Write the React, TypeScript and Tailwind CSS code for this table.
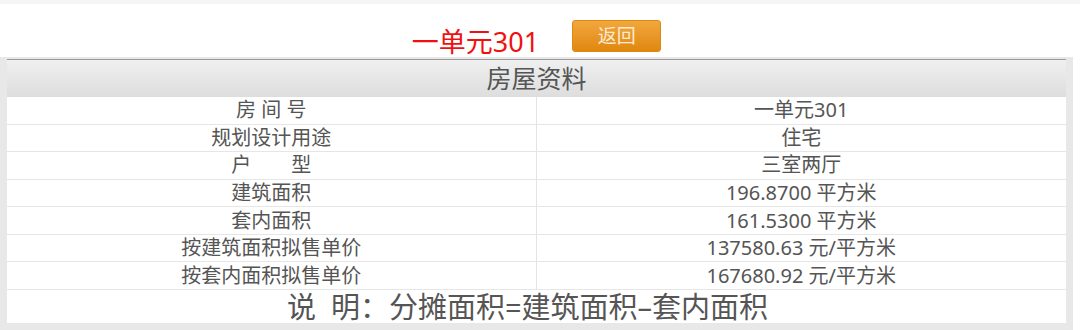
import React from "react";

const rows: [string, string][] = [
  ["房 间 号", "一单元301"],
  ["规划设计用途", "住宅"],
  ["户\u3000\u3000型", "三室两厅"],
  ["建筑面积", "196.8700 平方米"],
  ["套内面积", "161.5300 平方米"],
  ["按建筑面积拟售单价", "137580.63 元/平方米"],
  ["按套内面积拟售单价", "167680.92 元/平方米"],
];

const font = { fontFamily: '"Noto Sans", "Noto Sans CJK SC", sans-serif' };

export default function App() {
  return (
    <div className="w-[1080px] h-[330px] bg-white overflow-hidden" style={font}>
      <div className="h-[4px] bg-[#f5f5f5]" />
      <div className="h-[53px] flex justify-center items-start gap-[33px] pr-[7px]">
        <span className="mt-[24px] text-[27px] leading-[28px] text-[#f01010] whitespace-nowrap">一单元301</span>
        <button className="mt-[16px] w-[89px] h-[32px] rounded-[3px] border border-[#dd8a12] bg-gradient-to-b from-[#f2a73c] to-[#e0870a] text-[19px] leading-none text-[#fdebd0]">
          返回
        </button>
      </div>
      <div className="w-[1073px] bg-[#e8e8e8] pt-[2px] pl-[7px] pr-[7px] pb-[7px]">
        <div className="bg-white text-[#555]">
          <div className="h-[38px] border-t border-[#9a9a9a] bg-gradient-to-b from-[#f0f0f0] to-[#dddddd] flex items-center justify-center text-[25px] leading-none">
            房屋资料
          </div>
          {rows.map(([k, v]) => (
            <div key={k} className="h-[27.57px] grid grid-cols-2 border-b border-[#e6e6e6] text-[20px] leading-none">
              <div className="flex items-center justify-center border-r border-[#e4e4e4] whitespace-pre">{k}</div>
              <div className="flex items-center justify-center whitespace-pre">{v}</div>
            </div>
          ))}
          <div className="h-[33px] flex items-center justify-center pr-[18px] text-[29px] leading-none whitespace-pre">
            说  明：分摊面积=建筑面积–套内面积
          </div>
        </div>
      </div>
    </div>
  );
}
